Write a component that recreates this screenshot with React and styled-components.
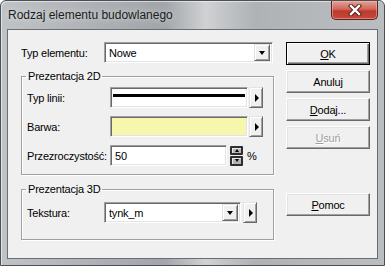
import React from "react";
import styled, { createGlobalStyle } from "styled-components";

const GlobalStyle = createGlobalStyle`
  html, body {
    margin: 0;
    padding: 0;
    background: #ffffff;
  }
  body {
    font-family: "Liberation Sans", Arial, sans-serif;
  }
`;

const Window = styled.div`
  box-sizing: border-box;
  width: 385px;
  height: 266px;
  display: flex;
  flex-direction: column;
  border: 1px solid #4c5054;
  border-radius: 6px 6px 0 0;
  background:
    linear-gradient(90deg, rgba(255,255,255,0) 0, rgba(255,255,255,0) 165px, rgba(255,255,255,0.45) 205px, rgba(255,255,255,0) 255px),
    linear-gradient(90deg, #bfc3c6 0, #aeb2b6 90px, #a2a6aa 160px, #b1b4b7 270px, #bbbec1 100%);
  box-shadow: inset 1px 1px 0 rgba(255, 255, 255, 0.55);
`;

const TitleBar = styled.div`
  height: 28px;
  flex: none;
  display: flex;
  justify-content: space-between;
  align-items: flex-start;
`;

const Title = styled.div`
  margin: 7px 0 0 7px;
  font-size: 12px;
  line-height: 14px;
  color: #1b1b1b;
  text-shadow: 0 0 6px rgba(255, 255, 255, 0.7);
`;

const CloseButton = styled.div`
  box-sizing: border-box;
  width: 47px;
  height: 19px;
  margin-right: 6px;
  display: flex;
  align-items: center;
  justify-content: center;
  border: 1px solid #5b2420;
  border-top: none;
  border-radius: 0 0 5px 5px;
  background: linear-gradient(#e3a196 0, #d2685c 45%, #bd3a2c 55%, #c5493a 100%);
  box-shadow: inset 0 0 0 1px rgba(255, 200, 190, 0.45);
`;

const Client = styled.div`
  flex: 1;
  margin: 0 6px 6px 6px;
  border: 1px solid #6a6e72;
  background: #f0f0f0;
  display: grid;
  grid-template-columns: 253px 84px;
  column-gap: 12px;
  align-items: start;
  padding: 12px 0 0 13px;
  font-size: 11px;
  letter-spacing: -0.2px;
  color: #000;
`;

const Main = styled.div`
  display: flex;
  flex-direction: column;
`;

const Row = styled.div`
  display: flex;
  align-items: center;
  height: 21px;
`;

const Label = styled.span`
  flex: none;
  width: ${(p) => p.w}px;
  white-space: nowrap;
`;

const Sunken = styled.div`
  box-sizing: border-box;
  width: ${(p) => p.w}px;
  height: 21px;
  display: flex;
  align-items: center;
  padding: 2px;
  background: ${(p) => p.bg || "#ffffff"};
  border: 1px solid;
  border-color: #a0a0a0 #ffffff #ffffff #a0a0a0;
  box-shadow: inset 1px 1px 0 #696969, inset -1px -1px 0 #e3e3e3;
`;

const ValueText = styled.span`
  flex: 1;
  padding-left: 2px;
`;

const Raised = styled.div`
  box-sizing: border-box;
  display: flex;
  align-items: center;
  justify-content: center;
  background: #f0f0f0;
  border: 1px solid;
  border-color: #e3e3e3 #696969 #696969 #e3e3e3;
  box-shadow: inset 1px 1px 0 #ffffff, inset -1px -1px 0 #a0a0a0;
`;

const DropButton = styled(Raised)`
  width: 16px;
  height: 17px;
`;

const ArrowButton = styled(Raised)`
  width: 14px;
  height: 21px;
  margin-left: ${(p) => p.gap}px;
`;

const DownTriangle = styled.span`
  width: 0;
  height: 0;
  border-left: 3.5px solid transparent;
  border-right: 3.5px solid transparent;
  border-top: 4px solid #000;
`;

const RightTriangle = styled.span`
  width: 0;
  height: 0;
  margin-left: 1px;
  border-top: 4px solid transparent;
  border-bottom: 4px solid transparent;
  border-left: 4px solid #000;
`;

const LineSample = styled.div`
  align-self: flex-start;
  flex: 1;
  height: 3px;
  margin-top: 4px;
  background: #000;
`;

const Group = styled.fieldset`
  margin: ${(p) => p.top}px 0 0 0;
  padding: ${(p) => p.pad};
  border: 1px solid #a0a0a0;
  box-shadow: 1px 1px 0 #ffffff, inset 1px 1px 0 #ffffff;
  display: flex;
  flex-direction: column;
  gap: 8px;
  min-width: 0;
`;

const Legend = styled.legend`
  margin-left: -1px;
  padding: 0 2px;
  line-height: 13px;
`;

const Spinner = styled.div`
  display: flex;
  flex-direction: column;
  gap: 1px;
  width: 13px;
  height: 20px;
  margin-left: 3px;
`;

const SpinHalf = styled.div`
  box-sizing: border-box;
  flex: 1;
  display: flex;
  align-items: center;
  justify-content: center;
  border: 2px solid #2e2e2e;
  border-radius: 1px;
  background: #b4b4b4;
  box-shadow: inset 1px 1px 0 #e8e8e8;
`;

const UpSmall = styled.span`
  width: 0;
  height: 0;
  border-left: 2.5px solid transparent;
  border-right: 2.5px solid transparent;
  border-bottom: 3px solid #000;
`;

const DownSmall = styled(UpSmall)`
  border-bottom: none;
  border-top: 3px solid #000;
`;

const Percent = styled.span`
  margin-left: 4px;
`;

const Side = styled.div`
  display: flex;
  flex-direction: column;
  gap: 5px;
`;

const Button = styled.div`
  box-sizing: border-box;
  height: 23px;
  margin-top: ${(p) => p.top || 0}px;
  display: flex;
  align-items: center;
  justify-content: center;
  background: #f0f0f0;
  border: 1px solid;
  border-color: ${(p) => (p.primary ? "#000" : "#ffffff #696969 #696969 #ffffff")};
  box-shadow: ${(p) =>
    p.primary
      ? "inset 1px 1px 0 #ffffff, inset -1px -1px 0 #696969, inset -2px -2px 0 #a0a0a0"
      : "inset -1px -1px 0 #a0a0a0, inset 1px 1px 0 #e3e3e3"};
  color: ${(p) => (p.disabled ? "#a0a0a0" : "#000")};
  text-shadow: ${(p) => (p.disabled ? "1px 1px 0 #ffffff" : "none")};
`;

function CloseGlyph() {
  return (
    <svg width="14" height="12" viewBox="0 0 14 12">
      <path d="M3 2 L11 10 M11 2 L3 10" stroke="#5a1d18" strokeWidth="4.4" strokeLinecap="square" />
      <path d="M3 2 L11 10 M11 2 L3 10" stroke="#ffffff" strokeWidth="2.4" strokeLinecap="square" />
    </svg>
  );
}

export default function App() {
  return (
    <>
      <GlobalStyle />
      <Window>
        <TitleBar>
          <Title>Rodzaj elementu budowlanego</Title>
          <CloseButton>
            <CloseGlyph />
          </CloseButton>
        </TitleBar>
        <Client>
          <Main>
            <Row>
              <Label w={83}>Typ elementu:</Label>
              <Sunken w={169}>
                <ValueText>Nowe</ValueText>
                <DropButton>
                  <DownTriangle />
                </DropButton>
              </Sunken>
            </Row>

            <Group top={7} pad="4px 0 8px 5px">
              <Legend>Prezentacja 2D</Legend>
              <Row>
                <Label w={83}>Typ linii:</Label>
                <Sunken w={138}>
                  <LineSample />
                </Sunken>
                <ArrowButton gap={1}>
                  <RightTriangle />
                </ArrowButton>
              </Row>
              <Row>
                <Label w={83}>Barwa:</Label>
                <Sunken w={138} bg="#f6f6ac" />
                <ArrowButton gap={1}>
                  <RightTriangle />
                </ArrowButton>
              </Row>
              <Row>
                <Label w={83}>Przezroczystość:</Label>
                <Sunken w={117}>
                  <ValueText>50</ValueText>
                </Sunken>
                <Spinner>
                  <SpinHalf>
                    <UpSmall />
                  </SpinHalf>
                  <SpinHalf>
                    <DownSmall />
                  </SpinHalf>
                </Spinner>
                <Percent>%</Percent>
              </Row>
            </Group>

            <Group top={8} pad="6px 0 16px 5px">
              <Legend>Prezentacja 3D</Legend>
              <Row>
                <Label w={77}>Tekstura:</Label>
                <Sunken w={137}>
                  <ValueText>tynk_m</ValueText>
                  <DropButton>
                    <DownTriangle />
                  </DropButton>
                </Sunken>
                <ArrowButton gap={2}>
                  <RightTriangle />
                </ArrowButton>
              </Row>
            </Group>
          </Main>

          <Side>
            <Button primary>
              <span>
                <u>O</u>K
              </span>
            </Button>
            <Button>Anuluj</Button>
            <Button>
              <span>
                <u>D</u>odaj...
              </span>
            </Button>
            <Button disabled>
              <span>
                <u>U</u>suń
              </span>
            </Button>
            <Button top={39}>
              <span>
                <u>P</u>omoc
              </span>
            </Button>
          </Side>
        </Client>
      </Window>
    </>
  );
}
